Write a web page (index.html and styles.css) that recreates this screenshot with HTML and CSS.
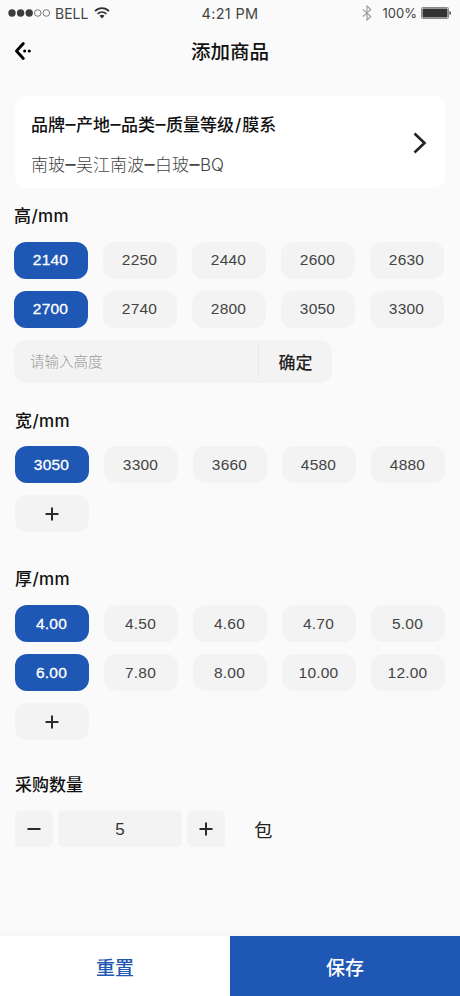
FILE: index.html
```
<!DOCTYPE html>
<html lang="zh-CN">
<head>
  <meta charset="UTF-8" />
  <meta name="viewport" content="width=device-width, initial-scale=1" />
  <title>添加商品</title>
  <link rel="stylesheet" href="styles.css">
</head>
<body>
  <div class="status-bar">
    <div class="status-left">
      <svg class="signal" width="42" height="10" viewBox="0 0 42 10">
        <g fill="#3c3c3c">
          <circle cx="4" cy="5" r="3.7" />
          <circle cx="12.6" cy="5" r="3.7" />
          <circle cx="21.2" cy="5" r="3.7" />
        </g>
        <g fill="none" stroke="#555" stroke-width="0.8">
          <circle cx="29.8" cy="5" r="3.3" />
          <circle cx="38.3" cy="5" r="3.3" />
        </g>
      </svg>
      <span class="carrier">BELL</span>
      <svg class="wifi" width="16" height="12" viewBox="0 0 16 12">
        <g fill="none" stroke="#333" stroke-width="1.7">
          <path d="M1 4.2C5 .1 11 .1 15 4.2" />
          <path d="M3.6 6.9c2.6-2.5 6.2-2.5 8.8 0" />
        </g>
        <path d="M5.5 8.8c1.5-1.3 3.5-1.3 5 0L8 11.5z" fill="#333" />
      </svg>
    </div>
    <span class="time">4:21 PM</span>
    <div class="status-right">
      <svg class="bluetooth" width="10" height="16" viewBox="0 0 10 16">
        <path d="M.8 4.3l8 7.2L5 15V1l3.8 3.5-8 7.2" fill="none" stroke="#999" stroke-width="1.1" />
      </svg>
      <span class="percent">100%</span>
      <svg class="battery" width="31" height="12" viewBox="0 0 31 12">
        <rect x=".5" y=".5" width="27" height="11" rx="1" fill="#fafafa" stroke="#888" />
        <rect x="1.5" y="1.5" width="25" height="9" fill="#333" />
        <path d="M28.5 4c2 .4 2 3.6 0 4z" fill="#444" />
      </svg>
    </div>
  </div>

  <header class="nav">
    <button class="back" type="button" aria-label="返回">
      <svg width="18" height="20" viewBox="0 0 18 20">
        <path d="M9.3 2.5L2.5 10l6.8 7.5" fill="none" stroke="#000" stroke-width="2.9" stroke-linecap="round" stroke-linejoin="round" />
        <circle cx="10.7" cy="10" r="1.55" />
        <circle cx="15.3" cy="10" r="1.55" />
      </svg>
    </button>
    <h1>添加商品</h1>
  </header>

  <main>
    <div class="product-card">
      <div>
        <h2>品牌<span class="dash">–</span>产地<span class="dash">–</span>品类<span class="dash">–</span>质量等级<span class="slash">/</span>膜系</h2>
        <p>南玻<span class="dash">–</span>吴江南波<span class="dash">–</span>白玻<span class="dash">–</span>BQ</p>
      </div>
      <svg width="14" height="22" viewBox="0 0 14 22">
        <path d="M1.5 1.5L11.5 11l-10 9.5" fill="none" stroke="#222" stroke-width="2.6" />
      </svg>
    </div>

    <section class="height-section">
      <h2>高/mm</h2>
      <div class="options">
        <button class="chip active">2140</button>
        <button class="chip">2250</button>
        <button class="chip">2440</button>
        <button class="chip">2600</button>
        <button class="chip">2630</button>
        <button class="chip active">2700</button>
        <button class="chip">2740</button>
        <button class="chip">2800</button>
        <button class="chip">3050</button>
        <button class="chip">3300</button>
      </div>
      <div class="custom-value">
        <input type="text" placeholder="请输入高度" />
        <button type="button">确定</button>
      </div>
    </section>

    <section class="width-section">
      <h2>宽/mm</h2>
      <div class="options">
        <button class="chip active">3050</button>
        <button class="chip">3300</button>
        <button class="chip">3660</button>
        <button class="chip">4580</button>
        <button class="chip">4880</button>
        <button class="chip" aria-label="添加宽度"><svg class="sign" viewBox="0 0 14 14"><path d="M.5 7h13M7 .5v13" /></svg></button>
      </div>
    </section>

    <section class="thickness-section">
      <h2>厚/mm</h2>
      <div class="options">
        <button class="chip active">4.00</button>
        <button class="chip">4.50</button>
        <button class="chip">4.60</button>
        <button class="chip">4.70</button>
        <button class="chip">5.00</button>
        <button class="chip active">6.00</button>
        <button class="chip">7.80</button>
        <button class="chip">8.00</button>
        <button class="chip">10.00</button>
        <button class="chip">12.00</button>
        <button class="chip" aria-label="添加厚度"><svg class="sign" viewBox="0 0 14 14"><path d="M.5 7h13M7 .5v13" /></svg></button>
      </div>
    </section>

    <section class="quantity-section">
      <h2>采购数量</h2>
      <div class="stepper">
        <button class="step" aria-label="减少"><svg class="sign" viewBox="0 0 14 14"><path d="M.5 7h13" /></svg></button>
        <span class="count">5</span>
        <button class="step" aria-label="增加"><svg class="sign" viewBox="0 0 14 14"><path d="M.5 7h13M7 .5v13" /></svg></button>
        <span class="unit">包</span>
      </div>
    </section>
  </main>

  <footer>
    <button class="reset">重置</button>
    <button class="save">保存</button>
  </footer>
</body>
</html>
```
FILE: styles.css
```
* {
  box-sizing: border-box;
}

body {
  margin: 0;
  height: 996px;
  display: flex;
  flex-direction: column;
  overflow: hidden;
  background: #fafafa;
  color: #111;
  font-family: "Liberation Sans", "Noto Sans CJK SC", sans-serif;
}

h1,
h2,
p {
  margin: 0;
}

button {
  padding: 0;
  border: none;
  background: none;
  color: inherit;
  font-family: inherit;
  cursor: pointer;
}

svg {
  display: block;
}

/* Status bar */
.status-bar {
  display: grid;
  grid-template-columns: 1fr auto 1fr;
  align-items: center;
  height: 26px;
  padding: 0 8px;
  color: #444;
  font-family: Inter, sans-serif;
  font-size: 13.5px;
}

.status-left,
.status-right {
  display: flex;
  align-items: center;
}

.status-right {
  justify-content: flex-end;
}

.carrier {
  margin: 0 6px 0 5px;
  font-size: 14px;
}

.time {
  font-size: 14.5px;
  letter-spacing: 0.3px;
}

.percent {
  margin: 0 4px 0 11px;
  font-size: 13px;
}

/* Title */
.nav {
  display: grid;
  grid-template-columns: 40px 1fr 40px;
  align-items: center;
  height: 50px;
  padding: 0 14px;
}

.nav h1 {
  padding-top: 1px;
  text-align: center;
  font-size: 19.5px;
  font-weight: 500;
  line-height: 28px;
}

main {
  flex: 1;
  padding: 20px 15px 0;
}

h2 {
  font-family: Inter, "Noto Sans CJK SC", sans-serif;
  font-size: 17px;
  font-weight: 500;
  line-height: 24px;
}

.product-card {
  display: flex;
  justify-content: space-between;
  align-items: center;
  height: 92px;
  padding: 4px 18px 0 16px;
  background: #fff;
  border-radius: 12px;
}

.product-card h2 {
  margin-bottom: 16px;
  padding-top: 2px;
}

.product-card p {
  color: #444;
  font-family: Inter, "Noto Sans CJK SC", sans-serif;
  font-size: 17px;
  font-weight: 300;
  line-height: 24px;
}

.product-card svg {
  margin-bottom: 2px;
}

.dash {
  margin: 0 0.5px;
  font-size: 20px;
  font-weight: 400;
  line-height: 1;
}

.slash {
  margin: 0 1px;
}

/* Size options */
section h2 {
  letter-spacing: 0.4px;
}

.height-section {
  margin: 16px 1px 0 -1px;
}

.width-section {
  margin-top: 26px;
}

.thickness-section {
  margin-top: 35px;
}

.quantity-section {
  margin-top: 33px;
}

.quantity-section h2 {
  letter-spacing: 0;
}

.options {
  display: grid;
  grid-template-columns: repeat(5, 74px);
  gap: 12px 15px;
  margin-top: 13px;
}

.height-section .options,
.thickness-section .options {
  margin-top: 14px;
}

.chip {
  display: flex;
  justify-content: center;
  align-items: center;
  height: 37px;
  padding-right: 1px;
  border-radius: 12px;
  background: #f3f3f3;
  color: #444;
  font-size: 15.5px;
  letter-spacing: 0.2px;
}

.height-section .chip {
  padding-bottom: 1px;
}

.chip.active {
  background: #1f57b4;
  color: #fff;
  -webkit-text-stroke: 0.3px #fff;
}

.sign {
  width: 14px;
  height: 14px;
  fill: none;
  stroke: #2b2b2b;
  stroke-width: 2;
}

.custom-value {
  display: flex;
  align-items: center;
  width: 318px;
  height: 43px;
  margin-top: 12px;
  border-radius: 12px;
  background: #f3f3f3;
}

.custom-value input {
  width: 245px;
  height: 35px;
  padding: 0 16px;
  border: none;
  border-right: 1px solid #e9e9e9;
  outline: none;
  background: none;
  font-family: inherit;
  font-size: 14.5px;
  font-weight: 300;
}

.custom-value input::placeholder {
  color: #999;
}

.custom-value button {
  flex: 1;
  color: #222;
  font-size: 17px;
  font-weight: 500;
}

/* Quantity */
.stepper {
  display: flex;
  align-items: center;
  height: 36px;
  margin-top: 14px;
}

.step,
.count {
  display: flex;
  justify-content: center;
  align-items: center;
  height: 36px;
  border-radius: 5px;
  background: #f3f3f3;
}

.step {
  width: 38px;
}

.count {
  width: 124px;
  margin: 0 5px;
  padding-top: 2px;
  color: #333;
  font-size: 17px;
}

.unit {
  margin-left: 29px;
  color: #222;
  font-size: 18.5px;
}

/* Bottom actions */
footer {
  display: flex;
  height: 60px;
  box-shadow: 0 -2px 5px rgba(0, 0, 0, 0.03);
}

footer button {
  flex: 1;
  font-size: 19px;
  font-weight: 500;
}

.reset {
  background: #fff;
  color: #1f57b4;
}

.save {
  background: #1f57b4;
  color: #fff;
}
```
